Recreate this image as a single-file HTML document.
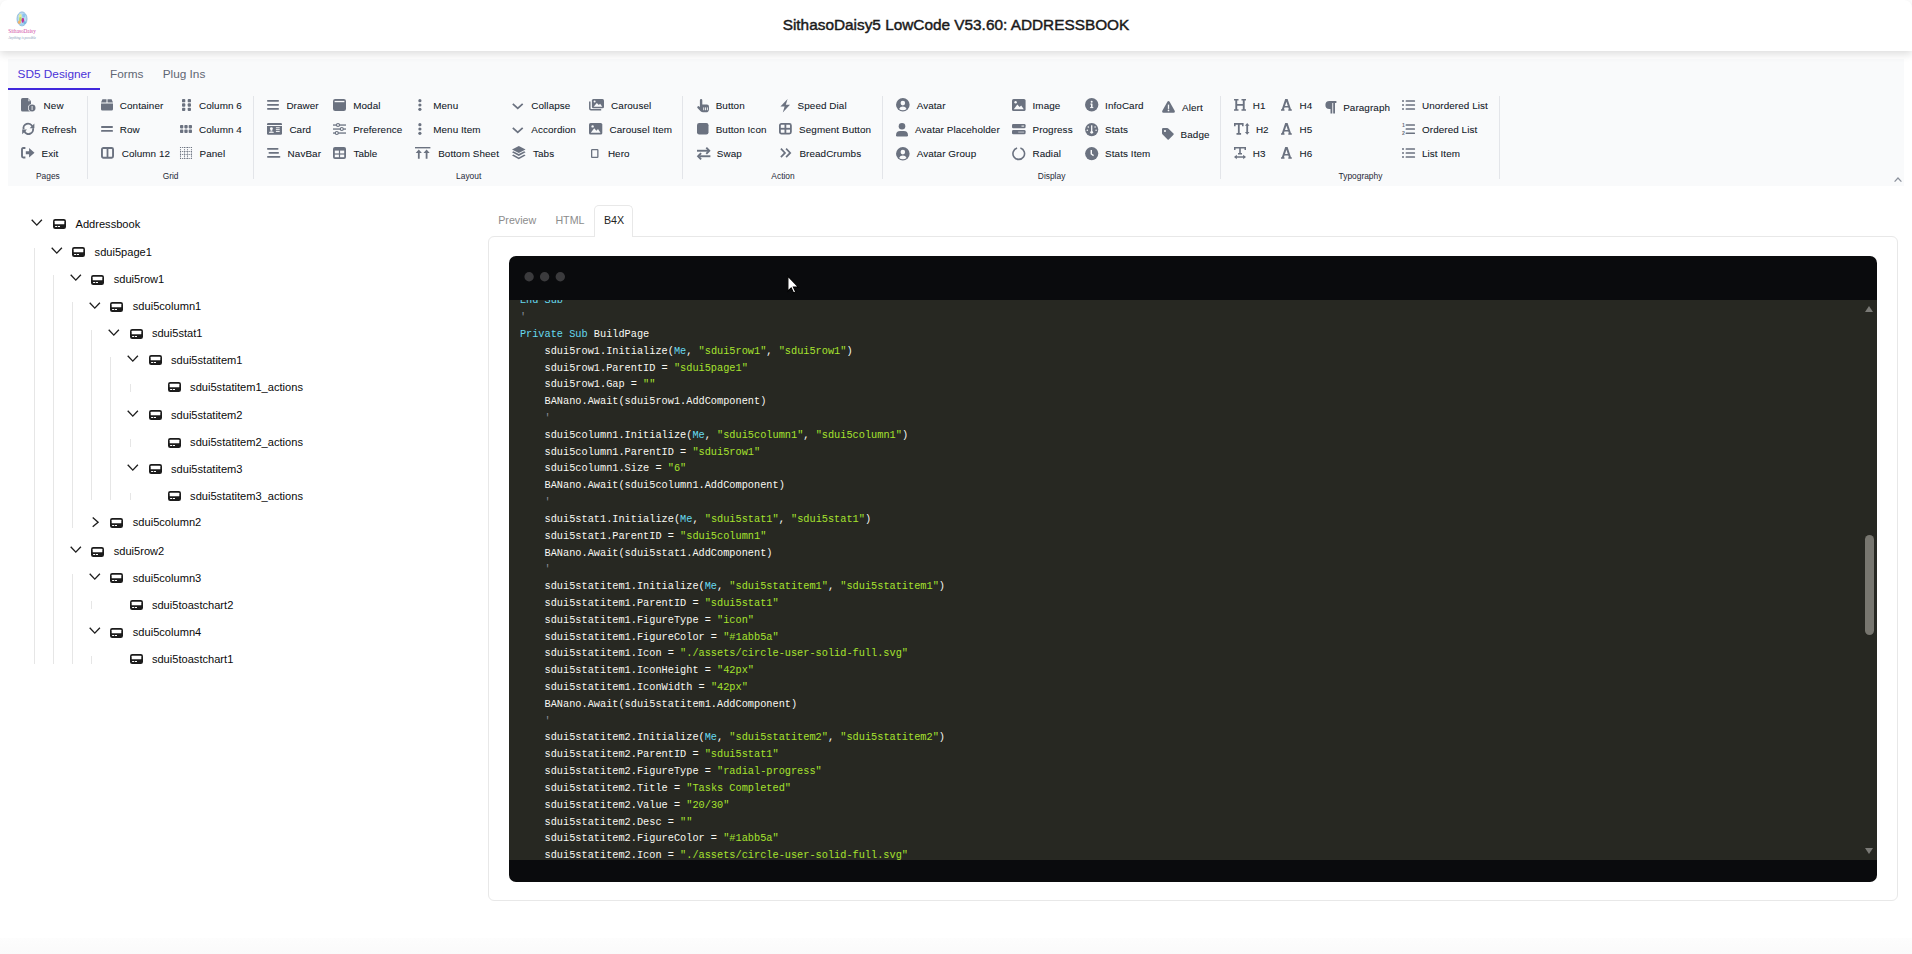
<!DOCTYPE html>
<html><head><meta charset="utf-8"><title>SithasoDaisy5 LowCode</title><style>
*{margin:0;padding:0}
html{background:#fff}
html,body{width:1912px;height:954px;overflow:hidden;font-family:"Liberation Sans",sans-serif}
.t{position:absolute;white-space:pre}
.i{position:absolute;overflow:visible}
#hdr{position:absolute;left:0;top:0;width:1912px;height:51px;background:#fff;border-radius:8px 8px 0 0;box-shadow:0 3px 9px rgba(0,0,0,.14)}
#ribbon{position:absolute;left:8px;top:59px;width:1896px;height:127px;background:#f9fafb;z-index:-1}
#cw{position:absolute;left:509.1px;top:256px;width:1367.9px;height:625.5px;background:#0a0b0d;border-radius:7px;overflow:hidden}
#code{position:absolute;left:0;top:44px;width:100%;height:559.6px;background:#272822;overflow:hidden}
#codein{position:absolute;left:10.8px;top:-24.48px;font-family:"Liberation Mono",monospace;font-size:10.27px;line-height:16.81px;color:#f8f8f2;white-space:pre}
#sbu{position:absolute;left:1355.9px;top:49.7px;width:0;height:0;border-left:4.6px solid transparent;border-right:4.6px solid transparent;border-bottom:6.3px solid #7a7a76}
#sbd{position:absolute;left:1355.7px;top:591.8px;width:0;height:0;border-left:4.6px solid transparent;border-right:4.6px solid transparent;border-top:6.1px solid #7a7a76}
#thumb{position:absolute;left:1355.8px;top:278.9px;width:9.2px;height:99.9px;border-radius:4.6px;background:#77766f}
</style></head>
<body>
<div id="hdr"></div>
<svg class="i" style="left:7px;top:10px" width="30" height="32" viewBox="0 0 30 32"><ellipse cx="15" cy="8.9" rx="5" ry="7" fill="#b9dcf2" stroke="#7fb0d8" stroke-width=".8"/><ellipse cx="13.2" cy="6" rx="1.5" ry="2" fill="#e6ec9a"/><ellipse cx="16.8" cy="5.6" rx="1.6" ry="2" fill="#8cc4ee"/><ellipse cx="13.4" cy="9.2" rx="1.4" ry="2.3" fill="#b8dc6a"/><ellipse cx="15.9" cy="10.3" rx="1.3" ry="2.6" fill="#c2319a"/><ellipse cx="12.4" cy="12.2" rx="1.5" ry="1.7" fill="#f2b36a"/><ellipse cx="17.6" cy="12.6" rx="1.4" ry="1.7" fill="#79b6e3"/><ellipse cx="15" cy="14.6" rx="2" ry="1.1" fill="#9fd0ef"/><text x="15" y="23" text-anchor="middle" font-family="Liberation Serif" font-size="6.6" fill="#d14aa5" textLength="27.5" lengthAdjust="spacingAndGlyphs">SithasoDaisy</text><text x="15" y="29.4" text-anchor="middle" font-family="Liberation Serif" font-style="italic" font-size="4.8" fill="#7d93b5" textLength="27.5" lengthAdjust="spacingAndGlyphs">Anything is possible</text></svg>
<div class="t" style="left:0;width:1912px;top:15px;font-size:15.37px;line-height:20px;text-align:center;font-weight:normal;color:#1a1a1a;-webkit-text-stroke:0.45px #1a1a1a"><span style="position:relative;left:0px">SithasoDaisy5 LowCode V53.60: ADDRESSBOOK</span></div>
<div id="ribbon"></div>
<div class="t" style="left:17.60px;top:68.81px;font-size:11.8px;line-height:11.8px;color:#4a32d8;font-weight:normal;font-family:'Liberation Sans';">SD5 Designer</div>
<div style="position:absolute;left:8px;top:88px;width:92px;height:2px;background:#4128dc"></div>
<div class="t" style="left:110.00px;top:68.81px;font-size:11.8px;line-height:11.8px;color:#5f6673;font-weight:normal;font-family:'Liberation Sans';">Forms</div>
<div class="t" style="left:162.70px;top:68.81px;font-size:11.8px;line-height:11.8px;color:#5f6673;font-weight:normal;font-family:'Liberation Sans';">Plug Ins</div>
<div style="position:absolute;left:87.1px;top:96.3px;width:1px;height:82.3px;background:#e3e5e9"></div>
<div style="position:absolute;left:253.0px;top:96.3px;width:1px;height:82.3px;background:#e3e5e9"></div>
<div style="position:absolute;left:681.9px;top:96.3px;width:1px;height:82.3px;background:#e3e5e9"></div>
<div style="position:absolute;left:881.9px;top:96.3px;width:1px;height:82.3px;background:#e3e5e9"></div>
<div style="position:absolute;left:1219.9px;top:96.3px;width:1px;height:82.3px;background:#e3e5e9"></div>
<div style="position:absolute;left:1499.0px;top:96.3px;width:1px;height:82.3px;background:#e3e5e9"></div>
<svg class="i" style="left:21.10px;top:98.40px;" width="15.00" height="13.60" viewBox="0 0 15.00 13.60"><path fill="#6b7280" d="M1.6 0H6.9L10 3.1V13.6H1.6Q0 13.6 0 12V1.6Q0 0 1.6 0Z"/><path fill="#f9fafb" d="M7 0.4V3.2H9.8Z" opacity=".6"/><circle cx="11.1" cy="10" r="4.1" fill="#f9fafb"/><circle cx="11.1" cy="10" r="3.4" fill="#6b7280"/><rect x="10.6" y="8" width="1" height="4" fill="#f9fafb" opacity=".85"/></svg>
<div class="t" style="left:43.60px;top:101.42px;font-size:9.9px;line-height:9.9px;color:#111827;font-weight:normal;font-family:'Liberation Sans';letter-spacing:.08px;-webkit-text-stroke:.07px #111827">New</div>
<svg class="i" style="left:21.80px;top:123.40px;" width="12.60" height="11.60" viewBox="0 0 12.60 11.60"><g fill="none" stroke="#6b7280" stroke-width="1.9"><path d="M1.6 6.3A4.6 4.6 0 0 1 10.3 3.4"/><path d="M11 5.3A4.6 4.6 0 0 1 2.3 8.2"/></g><path fill="#6b7280" d="M12.4 0.4V5.2H7.6Z"/><path fill="#6b7280" d="M0.2 11.2V6.4H5Z"/></svg>
<div class="t" style="left:41.50px;top:125.42px;font-size:9.9px;line-height:9.9px;color:#111827;font-weight:normal;font-family:'Liberation Sans';letter-spacing:.08px;-webkit-text-stroke:.07px #111827">Refresh</div>
<svg class="i" style="left:21.10px;top:147.10px;" width="13.60" height="11.50" viewBox="0 0 13.60 11.50"><path fill="none" stroke="#6b7280" stroke-width="1.9" d="M4.4 1H2.2Q1 1 1 2.2V9.3Q1 10.5 2.2 10.5H4.4"/><path fill="#6b7280" d="M4.8 4.2H8.1V1.1L13.5 5.75L8.1 10.4V7.3H4.8Z"/></svg>
<div class="t" style="left:41.50px;top:149.42px;font-size:9.9px;line-height:9.9px;color:#111827;font-weight:normal;font-family:'Liberation Sans';letter-spacing:.08px;-webkit-text-stroke:.07px #111827">Exit</div>
<svg class="i" style="left:101.00px;top:99.20px;" width="12.00" height="11.60" viewBox="0 0 12.00 11.60"><path fill="#6b7280" d="M1.4 0.3H5.5V3.6H0ZM6.5 0.3H10.6L12 3.6H6.5ZM0 4.5H12V10.2Q12 11.6 10.6 11.6H1.4Q0 11.6 0 10.2Z"/></svg>
<div class="t" style="left:119.80px;top:101.42px;font-size:9.9px;line-height:9.9px;color:#111827;font-weight:normal;font-family:'Liberation Sans';letter-spacing:.08px;-webkit-text-stroke:.07px #111827">Container</div>
<svg class="i" style="left:101.00px;top:126.20px;" width="12.00" height="5.80" viewBox="0 0 12.00 5.80"><rect x="0" y="0" width="12" height="1.9" rx=".9" fill="#6b7280"/><rect x="0" y="3.9" width="12" height="1.9" rx=".9" fill="#6b7280"/></svg>
<div class="t" style="left:119.80px;top:125.42px;font-size:9.9px;line-height:9.9px;color:#111827;font-weight:normal;font-family:'Liberation Sans';letter-spacing:.08px;-webkit-text-stroke:.07px #111827">Row</div>
<svg class="i" style="left:101.00px;top:147.00px;" width="13.00" height="11.70" viewBox="0 0 13.00 11.70"><rect x="0.95" y="0.95" width="11.1" height="9.8" rx="1.4" fill="none" stroke="#6b7280" stroke-width="1.9"/><rect x="5.6" y="1" width="1.8" height="9.8" fill="#6b7280"/></svg>
<div class="t" style="left:121.70px;top:149.42px;font-size:9.9px;line-height:9.9px;color:#111827;font-weight:normal;font-family:'Liberation Sans';letter-spacing:.08px;-webkit-text-stroke:.07px #111827">Column 12</div>
<svg class="i" style="left:182.20px;top:99.00px;" width="9.00" height="12.00" viewBox="0 0 9.00 12.00"><rect x="0" y="0" width="3.3" height="3.3" rx=".9" fill="#6b7280"/><rect x="0" y="4.35" width="3.3" height="3.3" rx=".9" fill="#6b7280"/><rect x="0" y="8.7" width="3.3" height="3.3" rx=".9" fill="#6b7280"/><rect x="5.7" y="0" width="3.3" height="3.3" rx=".9" fill="#6b7280"/><rect x="5.7" y="4.35" width="3.3" height="3.3" rx=".9" fill="#6b7280"/><rect x="5.7" y="8.7" width="3.3" height="3.3" rx=".9" fill="#6b7280"/></svg>
<div class="t" style="left:199.00px;top:101.42px;font-size:9.9px;line-height:9.9px;color:#111827;font-weight:normal;font-family:'Liberation Sans';letter-spacing:.08px;-webkit-text-stroke:.07px #111827">Column 6</div>
<svg class="i" style="left:180.00px;top:125.00px;" width="12.00" height="8.00" viewBox="0 0 12.00 8.00"><rect x="0" y="0" width="3.3" height="3.4" rx=".8" fill="#6b7280"/><rect x="0" y="4.6" width="3.3" height="3.4" rx=".8" fill="#6b7280"/><rect x="4.35" y="0" width="3.3" height="3.4" rx=".8" fill="#6b7280"/><rect x="4.35" y="4.6" width="3.3" height="3.4" rx=".8" fill="#6b7280"/><rect x="8.7" y="0" width="3.3" height="3.4" rx=".8" fill="#6b7280"/><rect x="8.7" y="4.6" width="3.3" height="3.4" rx=".8" fill="#6b7280"/></svg>
<div class="t" style="left:199.00px;top:125.42px;font-size:9.9px;line-height:9.9px;color:#111827;font-weight:normal;font-family:'Liberation Sans';letter-spacing:.08px;-webkit-text-stroke:.07px #111827">Column 4</div>
<svg class="i" style="left:180.00px;top:147.00px;" width="12.00" height="12.00" viewBox="0 0 12.00 12.00"><g stroke="#6b7280" stroke-width="1.05" stroke-dasharray="1.1 1.05"><line x1="0.5" y1="0" x2="0.5" y2="12"/><line x1="0" y1="0.5" x2="12" y2="0.5"/><line x1="4.5" y1="0" x2="4.5" y2="12"/><line x1="0" y1="4.5" x2="12" y2="4.5"/><line x1="7.5" y1="0" x2="7.5" y2="12"/><line x1="0" y1="7.5" x2="12" y2="7.5"/><line x1="11.5" y1="0" x2="11.5" y2="12"/><line x1="0" y1="11.5" x2="12" y2="11.5"/></g></svg>
<div class="t" style="left:199.50px;top:149.42px;font-size:9.9px;line-height:9.9px;color:#111827;font-weight:normal;font-family:'Liberation Sans';letter-spacing:.08px;-webkit-text-stroke:.07px #111827">Panel</div>
<svg class="i" style="left:267.20px;top:100.00px;" width="12.00" height="9.80" viewBox="0 0 12.00 9.80"><rect x="0" y="0" width="12" height="1.7" rx=".8" fill="#6b7280"/><rect x="0" y="4.05" width="12" height="1.7" rx=".8" fill="#6b7280"/><rect x="0" y="8.1" width="12" height="1.7" rx=".8" fill="#6b7280"/></svg>
<div class="t" style="left:286.40px;top:101.42px;font-size:9.9px;line-height:9.9px;color:#111827;font-weight:normal;font-family:'Liberation Sans';letter-spacing:.08px;-webkit-text-stroke:.07px #111827">Drawer</div>
<svg class="i" style="left:267.20px;top:123.30px;" width="15.00" height="11.80" viewBox="0 0 15.00 11.80"><path fill="#6b7280" d="M1.2 0H13.8Q15 0 15 1.2V2.1H0V1.2Q0 0 1.2 0Z"/><path fill="#6b7280" d="M0 3H15V10.6Q15 11.8 13.8 11.8H1.2Q0 11.8 0 10.6Z"/><circle cx="4.4" cy="5.7" r="1.45" fill="#f9fafb"/><path fill="#f9fafb" d="M3.6 7.2H5.2L5.6 8.6H3.2Z"/><rect x="2.1" y="8.8" width="4.6" height="1.05" fill="#f9fafb"/><rect x="8.9" y="4.3" width="3.8" height=".95" fill="#f9fafb"/><rect x="8.9" y="6.2" width="3.8" height=".95" fill="#f9fafb"/><rect x="8.9" y="8.1" width="3.8" height=".95" fill="#f9fafb"/></svg>
<div class="t" style="left:289.40px;top:125.42px;font-size:9.9px;line-height:9.9px;color:#111827;font-weight:normal;font-family:'Liberation Sans';letter-spacing:.08px;-webkit-text-stroke:.07px #111827">Card</div>
<svg class="i" style="left:267.20px;top:148.00px;" width="13.40" height="9.80" viewBox="0 0 13.40 9.80"><rect x="0" y="0" width="11.5" height="1.7" rx=".8" fill="#6b7280"/><rect x="1.5" y="4.05" width="10.5" height="1.7" rx=".8" fill="#6b7280"/><rect x="0" y="8.1" width="13.4" height="1.7" rx=".8" fill="#6b7280"/></svg>
<div class="t" style="left:287.60px;top:149.42px;font-size:9.9px;line-height:9.9px;color:#111827;font-weight:normal;font-family:'Liberation Sans';letter-spacing:.08px;-webkit-text-stroke:.07px #111827">NavBar</div>
<svg class="i" style="left:332.80px;top:99.00px;" width="13.00" height="12.00" viewBox="0 0 13.00 12.00"><rect x="0" y="0" width="13" height="12" rx="2.2" fill="#6b7280"/><rect x="1.6" y="1.9" width="9.8" height="1.3" fill="#f9fafb"/></svg>
<div class="t" style="left:353.20px;top:101.42px;font-size:9.9px;line-height:9.9px;color:#111827;font-weight:normal;font-family:'Liberation Sans';letter-spacing:.08px;-webkit-text-stroke:.07px #111827">Modal</div>
<svg class="i" style="left:332.80px;top:123.00px;" width="13.00" height="12.00" viewBox="0 0 13.00 12.00"><g fill="#6b7280"><rect x="0" y="1.4" width="13" height="1.3"/><rect x="0" y="5.4" width="13" height="1.3"/><rect x="0" y="9.4" width="13" height="1.3"/></g><g fill="#f9fafb" stroke="#6b7280" stroke-width="1.2"><circle cx="5" cy="2" r="1.5"/><circle cx="8.8" cy="6" r="1.5"/><circle cx="3.8" cy="10" r="1.5"/></g></svg>
<div class="t" style="left:353.20px;top:125.42px;font-size:9.9px;line-height:9.9px;color:#111827;font-weight:normal;font-family:'Liberation Sans';letter-spacing:.08px;-webkit-text-stroke:.07px #111827">Preference</div>
<svg class="i" style="left:332.80px;top:147.00px;" width="13.00" height="12.00" viewBox="0 0 13.00 12.00"><rect x="0" y="0" width="13" height="12" rx="2" fill="#6b7280"/><g fill="#f9fafb"><rect x="1.8" y="3.6" width="4.1" height="2.8"/><rect x="7.1" y="3.6" width="4.1" height="2.8"/><rect x="1.8" y="7.6" width="4.1" height="2.6"/><rect x="7.1" y="7.6" width="4.1" height="2.6"/></g></svg>
<div class="t" style="left:353.40px;top:149.42px;font-size:9.9px;line-height:9.9px;color:#111827;font-weight:normal;font-family:'Liberation Sans';letter-spacing:.08px;-webkit-text-stroke:.07px #111827">Table</div>
<svg class="i" style="left:418.40px;top:99.00px;" width="3.80" height="12.00" viewBox="0 0 3.80 12.00"><circle cx="1.9" cy="1.7" r="1.6" fill="#6b7280"/><circle cx="1.9" cy="6" r="1.6" fill="#6b7280"/><circle cx="1.9" cy="10.3" r="1.6" fill="#6b7280"/></svg>
<div class="t" style="left:433.20px;top:101.42px;font-size:9.9px;line-height:9.9px;color:#111827;font-weight:normal;font-family:'Liberation Sans';letter-spacing:.08px;-webkit-text-stroke:.07px #111827">Menu</div>
<svg class="i" style="left:418.40px;top:123.00px;" width="3.80" height="12.00" viewBox="0 0 3.80 12.00"><circle cx="1.9" cy="1.7" r="1.6" fill="#6b7280"/><circle cx="1.9" cy="6" r="1.6" fill="#6b7280"/><circle cx="1.9" cy="10.3" r="1.6" fill="#6b7280"/></svg>
<div class="t" style="left:433.20px;top:125.42px;font-size:9.9px;line-height:9.9px;color:#111827;font-weight:normal;font-family:'Liberation Sans';letter-spacing:.08px;-webkit-text-stroke:.07px #111827">Menu Item</div>
<svg class="i" style="left:415.00px;top:147.10px;" width="15.40" height="11.70" viewBox="0 0 15.40 11.70"><rect x="0" y="0" width="15.4" height="1.4" fill="#6b7280"/><path fill="#6b7280" d="M3.8 2.4L0.7 6H2.9V11.7H4.7V6H6.9Z"/><path fill="#6b7280" d="M11.6 2.4L8.5 6H10.7V11.7H12.5V6H14.7Z"/></svg>
<div class="t" style="left:438.20px;top:149.42px;font-size:9.9px;line-height:9.9px;color:#111827;font-weight:normal;font-family:'Liberation Sans';letter-spacing:.08px;-webkit-text-stroke:.07px #111827">Bottom Sheet</div>
<svg class="i" style="left:511.60px;top:102.90px;" width="11.50" height="6.40" viewBox="0 0 11.50 6.40"><path d="M0.8 0.8L5.75 5.4L10.7 0.8" fill="none" stroke="#6b7280" stroke-width="1.75"/></svg>
<div class="t" style="left:531.30px;top:101.42px;font-size:9.9px;line-height:9.9px;color:#111827;font-weight:normal;font-family:'Liberation Sans';letter-spacing:.08px;-webkit-text-stroke:.07px #111827">Collapse</div>
<svg class="i" style="left:511.60px;top:126.90px;" width="11.50" height="6.40" viewBox="0 0 11.50 6.40"><path d="M0.8 0.8L5.75 5.4L10.7 0.8" fill="none" stroke="#6b7280" stroke-width="1.75"/></svg>
<div class="t" style="left:531.30px;top:125.42px;font-size:9.9px;line-height:9.9px;color:#111827;font-weight:normal;font-family:'Liberation Sans';letter-spacing:.08px;-webkit-text-stroke:.07px #111827">Accordion</div>
<svg class="i" style="left:511.60px;top:146.40px;" width="13.60" height="13.20" viewBox="0 0 13.60 13.20"><g fill="#6b7280"><path d="M6.8 0L13.6 3.5L6.8 7L0 3.5Z"/><path d="M1.4 5.3L6.8 8.1L12.2 5.3L13.6 6.3L6.8 9.9L0 6.3Z"/><path d="M1.4 8.6L6.8 11.4L12.2 8.6L13.6 9.6L6.8 13.2L0 9.6Z"/></g></svg>
<div class="t" style="left:533.00px;top:149.42px;font-size:9.9px;line-height:9.9px;color:#111827;font-weight:normal;font-family:'Liberation Sans';letter-spacing:.08px;-webkit-text-stroke:.07px #111827">Tabs</div>
<svg class="i" style="left:589.10px;top:99.20px;" width="15.00" height="11.50" viewBox="0 0 15.00 11.50"><path d="M0.8 2.6V9.6Q0.8 10.8 2 10.8H12.2" fill="none" stroke="#6b7280" stroke-width="1.5"/><rect x="2.9" y="0" width="12.1" height="9.3" rx="1.5" fill="#6b7280"/><path fill="#f9fafb" d="M4.6 7.8L7.8 3.9L9.8 6L11.1 4.7L13.3 7.8Z"/><circle cx="5.6" cy="2.6" r="1" fill="#f9fafb"/></svg>
<div class="t" style="left:611.10px;top:101.42px;font-size:9.9px;line-height:9.9px;color:#111827;font-weight:normal;font-family:'Liberation Sans';letter-spacing:.08px;-webkit-text-stroke:.07px #111827">Carousel</div>
<svg class="i" style="left:589.10px;top:123.30px;" width="13.30" height="11.60" viewBox="0 0 13.30 11.60"><rect x="0" y="0" width="13.3" height="11.6" rx="1.6" fill="#6b7280"/><path fill="#f9fafb" d="M1.8 9.8L5.2 5.2L7.4 7.7L9 6.1L11.5 9.8Z"/><circle cx="3.6" cy="3.4" r="1.2" fill="#f9fafb"/></svg>
<div class="t" style="left:609.50px;top:125.42px;font-size:9.9px;line-height:9.9px;color:#111827;font-weight:normal;font-family:'Liberation Sans';letter-spacing:.08px;-webkit-text-stroke:.07px #111827">Carousel Item</div>
<svg class="i" style="left:591.10px;top:148.70px;" width="7.50" height="9.00" viewBox="0 0 7.50 9.00"><rect x="0.65" y="0.65" width="6.2" height="7.7" rx=".6" fill="none" stroke="#6b7280" stroke-width="1.3"/></svg>
<div class="t" style="left:607.90px;top:149.42px;font-size:9.9px;line-height:9.9px;color:#111827;font-weight:normal;font-family:'Liberation Sans';letter-spacing:.08px;-webkit-text-stroke:.07px #111827">Hero</div>
<svg class="i" style="left:696.70px;top:98.60px;" width="12.00" height="13.30" viewBox="0 0 12.00 13.30"><path fill="#6b7280" d="M2.9 1.3Q2.9 0 4.1 0Q5.3 0 5.3 1.3V5.6H9.9Q12 5.6 12 7.7V10.2Q12 13.3 8.9 13.3H6.1Q4.6 13.3 3.6 12.2L0.5 8.9Q-0.2 8.1 0.6 7.4Q1.4 6.7 2.2 7.4L2.9 8.1Z"/><g fill="#f9fafb"><rect x="6.3" y="8.4" width=".9" height="2.8"/><rect x="8.1" y="8.4" width=".9" height="2.8"/><rect x="9.9" y="8.4" width=".9" height="2.8"/></g></svg>
<div class="t" style="left:715.70px;top:101.42px;font-size:9.9px;line-height:9.9px;color:#111827;font-weight:normal;font-family:'Liberation Sans';letter-spacing:.08px;-webkit-text-stroke:.07px #111827">Button</div>
<svg class="i" style="left:696.70px;top:123.40px;" width="11.50" height="11.50" viewBox="0 0 11.50 11.50"><rect x="0" y="0" width="11.5" height="11.5" rx="2.2" fill="#6b7280"/></svg>
<div class="t" style="left:715.70px;top:125.42px;font-size:9.9px;line-height:9.9px;color:#111827;font-weight:normal;font-family:'Liberation Sans';letter-spacing:.08px;-webkit-text-stroke:.07px #111827">Button Icon</div>
<svg class="i" style="left:696.70px;top:146.60px;" width="13.40" height="13.00" viewBox="0 0 13.40 13.00"><g fill="#6b7280"><rect x="0" y="2.8" width="11" height="1.9"/><rect x="2.4" y="8.3" width="11" height="1.9"/></g><g fill="none" stroke="#6b7280" stroke-width="1.9"><path d="M9.3 0.7L12.3 3.75L9.3 6.8"/><path d="M4.1 6.2L1.1 9.25L4.1 12.3"/></g></svg>
<div class="t" style="left:716.80px;top:149.42px;font-size:9.9px;line-height:9.9px;color:#111827;font-weight:normal;font-family:'Liberation Sans';letter-spacing:.08px;-webkit-text-stroke:.07px #111827">Swap</div>
<svg class="i" style="left:779.50px;top:98.60px;" width="10.40" height="13.40" viewBox="0 0 10.40 13.40"><path fill="#6b7280" d="M7.6 0L0.4 7.6H4.6L2.8 13.4L10 5.8H5.8Z"/></svg>
<div class="t" style="left:797.60px;top:101.42px;font-size:9.9px;line-height:9.9px;color:#111827;font-weight:normal;font-family:'Liberation Sans';letter-spacing:.08px;-webkit-text-stroke:.07px #111827">Speed Dial</div>
<svg class="i" style="left:779.00px;top:123.40px;" width="12.80" height="11.50" viewBox="0 0 12.80 11.50"><rect x="0.9" y="0.9" width="11" height="9.7" rx="1.5" fill="none" stroke="#6b7280" stroke-width="1.8"/><rect x="5.5" y="1" width="1.8" height="9.6" fill="#6b7280"/><rect x="1" y="4.85" width="10.8" height="1.8" fill="#6b7280"/></svg>
<div class="t" style="left:799.10px;top:125.42px;font-size:9.9px;line-height:9.9px;color:#111827;font-weight:normal;font-family:'Liberation Sans';letter-spacing:.08px;-webkit-text-stroke:.07px #111827">Segment Button</div>
<svg class="i" style="left:780.10px;top:148.10px;" width="11.30" height="9.80" viewBox="0 0 11.30 9.80"><g fill="none" stroke="#6b7280" stroke-width="1.7"><path d="M0.9 0.7L5 4.9L0.9 9.1"/><path d="M6.1 0.7L10.2 4.9L6.1 9.1"/></g></svg>
<div class="t" style="left:799.40px;top:149.42px;font-size:9.9px;line-height:9.9px;color:#111827;font-weight:normal;font-family:'Liberation Sans';letter-spacing:.08px;-webkit-text-stroke:.07px #111827">BreadCrumbs</div>
<svg class="i" style="left:896.20px;top:98.40px;" width="13.70" height="13.60" viewBox="0 0 13.70 13.60"><circle cx="6.85" cy="6.8" r="6.8" fill="#6b7280"/><circle cx="6.85" cy="5.1" r="2.3" fill="#f9fafb"/><path fill="#f9fafb" d="M3.1 10.9Q4.2 8.6 6.85 8.6Q9.5 8.6 10.6 10.9Q9 12.3 6.85 12.3Q4.7 12.3 3.1 10.9Z"/></svg>
<div class="t" style="left:916.70px;top:101.42px;font-size:9.9px;line-height:9.9px;color:#111827;font-weight:normal;font-family:'Liberation Sans';letter-spacing:.08px;-webkit-text-stroke:.07px #111827">Avatar</div>
<svg class="i" style="left:896.20px;top:122.50px;" width="12.00" height="13.40" viewBox="0 0 12.00 13.40"><circle cx="6" cy="3.3" r="3.3" fill="#6b7280"/><path fill="#6b7280" d="M0 12.2Q0 7.9 4.2 7.9H7.8Q12 7.9 12 12.2Q12 13.4 10.8 13.4H1.2Q0 13.4 0 12.2Z"/></svg>
<div class="t" style="left:915.10px;top:125.42px;font-size:9.9px;line-height:9.9px;color:#111827;font-weight:normal;font-family:'Liberation Sans';letter-spacing:.08px;-webkit-text-stroke:.07px #111827">Avatar Placeholder</div>
<svg class="i" style="left:896.20px;top:146.60px;" width="13.70" height="13.60" viewBox="0 0 13.70 13.60"><circle cx="6.85" cy="6.8" r="6.8" fill="#6b7280"/><circle cx="6.85" cy="5.1" r="2.3" fill="#f9fafb"/><path fill="#f9fafb" d="M3.1 10.9Q4.2 8.6 6.85 8.6Q9.5 8.6 10.6 10.9Q9 12.3 6.85 12.3Q4.7 12.3 3.1 10.9Z"/></svg>
<div class="t" style="left:916.70px;top:149.42px;font-size:9.9px;line-height:9.9px;color:#111827;font-weight:normal;font-family:'Liberation Sans';letter-spacing:.08px;-webkit-text-stroke:.07px #111827">Avatar Group</div>
<svg class="i" style="left:1012.10px;top:98.90px;" width="13.60" height="12.10" viewBox="0 0 13.60 12.10"><rect x="0" y="0" width="13.6" height="12.1" rx="1.6" fill="#6b7280"/><path fill="#f9fafb" d="M1.8 10.3L5.3 5.5L7.6 8.1L9.2 6.5L11.8 10.3Z"/><circle cx="3.6" cy="3.3" r="1.2" fill="#f9fafb"/></svg>
<div class="t" style="left:1032.50px;top:101.42px;font-size:9.9px;line-height:9.9px;color:#111827;font-weight:normal;font-family:'Liberation Sans';letter-spacing:.08px;-webkit-text-stroke:.07px #111827">Image</div>
<svg class="i" style="left:1012.10px;top:123.80px;" width="13.60" height="10.20" viewBox="0 0 13.60 10.20"><rect x="0" y="0" width="13.6" height="4.3" rx="1.3" fill="#6b7280"/><rect x="0" y="5.9" width="13.6" height="4.3" rx="1.3" fill="#6b7280"/><rect x="9.5" y="1.6" width="2.6" height="1" fill="#f9fafb"/><rect x="6.2" y="7.6" width="5.9" height="1" fill="#f9fafb" opacity=".6"/></svg>
<div class="t" style="left:1032.50px;top:125.42px;font-size:9.9px;line-height:9.9px;color:#111827;font-weight:normal;font-family:'Liberation Sans';letter-spacing:.08px;-webkit-text-stroke:.07px #111827">Progress</div>
<svg class="i" style="left:1012.10px;top:146.60px;" width="13.60" height="13.10" viewBox="0 0 13.60 13.10"><path d="M8.4 1.05A5.8 5.8 0 1 1 5.1 1.05" fill="none" stroke="#6b7280" stroke-width="1.6"/></svg>
<div class="t" style="left:1032.50px;top:149.42px;font-size:9.9px;line-height:9.9px;color:#111827;font-weight:normal;font-family:'Liberation Sans';letter-spacing:.08px;-webkit-text-stroke:.07px #111827">Radial</div>
<svg class="i" style="left:1084.70px;top:98.40px;" width="13.40" height="13.40" viewBox="0 0 13.40 13.40"><circle cx="6.7" cy="6.7" r="6.7" fill="#6b7280"/><circle cx="6.7" cy="3.7" r="1" fill="#f9fafb"/><rect x="6" y="5.6" width="1.5" height="4" fill="#f9fafb"/><rect x="5.1" y="9.1" width="3.2" height="1" fill="#f9fafb"/><rect x="5.3" y="5.6" width="1.5" height="1" fill="#f9fafb"/></svg>
<div class="t" style="left:1105.10px;top:101.42px;font-size:9.9px;line-height:9.9px;color:#111827;font-weight:normal;font-family:'Liberation Sans';letter-spacing:.08px;-webkit-text-stroke:.07px #111827">InfoCard</div>
<svg class="i" style="left:1084.70px;top:122.50px;" width="13.40" height="13.10" viewBox="0 0 13.40 13.10"><circle cx="6.7" cy="6.55" r="6.6" fill="#6b7280"/><rect x="6.05" y="2.3" width="1.3" height="6.5" fill="#f9fafb"/><circle cx="6.7" cy="9.3" r="1.4" fill="#f9fafb"/><circle cx="3.3" cy="4" r=".8" fill="#f9fafb"/><circle cx="10.1" cy="4" r=".8" fill="#f9fafb"/><circle cx="2.3" cy="7.2" r=".8" fill="#f9fafb"/><circle cx="11.1" cy="7.2" r=".8" fill="#f9fafb"/></svg>
<div class="t" style="left:1105.10px;top:125.42px;font-size:9.9px;line-height:9.9px;color:#111827;font-weight:normal;font-family:'Liberation Sans';letter-spacing:.08px;-webkit-text-stroke:.07px #111827">Stats</div>
<svg class="i" style="left:1084.70px;top:146.60px;" width="13.40" height="13.10" viewBox="0 0 13.40 13.10"><circle cx="6.7" cy="6.55" r="6.6" fill="#6b7280"/><path d="M6.3 3V7L8.6 8.6" fill="none" stroke="#f9fafb" stroke-width="1.4"/></svg>
<div class="t" style="left:1105.10px;top:149.42px;font-size:9.9px;line-height:9.9px;color:#111827;font-weight:normal;font-family:'Liberation Sans';letter-spacing:.08px;-webkit-text-stroke:.07px #111827">Stats Item</div>
<svg class="i" style="left:1162.00px;top:101.00px;" width="13.00" height="11.80" viewBox="0 0 13.00 11.80"><path fill="#6b7280" d="M6.5 0Q7.2 0 7.6 0.7L12.8 10Q13.4 11.8 11.7 11.8H1.3Q-0.4 11.8 0.2 10L5.4 0.7Q5.8 0 6.5 0Z"/><rect x="5.85" y="3.6" width="1.3" height="4.3" fill="#f9fafb"/><circle cx="6.5" cy="9.4" r=".85" fill="#f9fafb"/></svg>
<div class="t" style="left:1182.10px;top:102.82px;font-size:9.9px;line-height:9.9px;color:#111827;font-weight:normal;font-family:'Liberation Sans';letter-spacing:.08px;-webkit-text-stroke:.07px #111827">Alert</div>
<svg class="i" style="left:1161.70px;top:128.00px;" width="11.90" height="11.80" viewBox="0 0 11.90 11.80"><path fill="#6b7280" d="M0 1.2Q0 0 1.2 0H5.3Q5.9 0 6.3 0.4L11.5 5.6Q12.1 6.2 11.5 6.8L6.8 11.5Q6.2 12.1 5.6 11.5L0.4 6.3Q0 5.9 0 5.3Z"/><circle cx="3" cy="3" r="1.05" fill="#f9fafb"/></svg>
<div class="t" style="left:1180.60px;top:130.02px;font-size:9.9px;line-height:9.9px;color:#111827;font-weight:normal;font-family:'Liberation Sans';letter-spacing:.08px;-webkit-text-stroke:.07px #111827">Badge</div>
<svg class="i" style="left:1233.60px;top:99.20px;" width="12.00" height="11.80" viewBox="0 0 12.00 11.80"><path fill="#6b7280" d="M0 0H4.5V1.6H3.2V5H8.8V1.6H7.5V0H12V1.6H10.7V10.2H12V11.8H7.5V10.2H8.8V6.7H3.2V10.2H4.5V11.8H0V10.2H1.3V1.6H0Z"/></svg>
<div class="t" style="left:1252.70px;top:101.42px;font-size:9.9px;line-height:9.9px;color:#111827;font-weight:normal;font-family:'Liberation Sans';letter-spacing:.08px;-webkit-text-stroke:.07px #111827">H1</div>
<svg class="i" style="left:1233.60px;top:123.30px;" width="15.50" height="11.80" viewBox="0 0 15.50 11.80"><path fill="#6b7280" d="M0 0H9.6V3.3H8V1.7H5.7V10.1H7.1V11.8H2.5V10.1H3.9V1.7H1.6V3.3H0Z"/><path fill="#6b7280" d="M13.2 0L15.5 2.7H14.1V9.1H15.5L13.2 11.8L10.9 9.1H12.3V2.7H10.9Z"/></svg>
<div class="t" style="left:1255.90px;top:125.42px;font-size:9.9px;line-height:9.9px;color:#111827;font-weight:normal;font-family:'Liberation Sans';letter-spacing:.08px;-webkit-text-stroke:.07px #111827">H2</div>
<svg class="i" style="left:1233.60px;top:147.10px;" width="12.00" height="12.10" viewBox="0 0 12.00 12.10"><path fill="#6b7280" d="M0 0H12V2.9H10.5V1.6H6.8V6.1H8V7.4H4V6.1H5.2V1.6H1.5V2.9H0Z"/><path fill="#6b7280" d="M0 10L2.8 7.8V9.2H9.2V7.8L12 10L9.2 12.2V10.8H2.8V12.2Z"/></svg>
<div class="t" style="left:1252.70px;top:149.42px;font-size:9.9px;line-height:9.9px;color:#111827;font-weight:normal;font-family:'Liberation Sans';letter-spacing:.08px;-webkit-text-stroke:.07px #111827">H3</div>
<svg class="i" style="left:1281.30px;top:99.20px;" width="10.80" height="11.80" viewBox="0 0 10.80 11.80"><path fill="#6b7280" fill-rule="evenodd" d="M4.2 0H6.6L10 10.2H10.8V11.8H7.3V10.2H7.9L7.3 8.5H3.5L2.9 10.2H3.5V11.8H0V10.2H0.8ZM4 7H6.8L5.4 2.8Z"/></svg>
<div class="t" style="left:1299.50px;top:101.42px;font-size:9.9px;line-height:9.9px;color:#111827;font-weight:normal;font-family:'Liberation Sans';letter-spacing:.08px;-webkit-text-stroke:.07px #111827">H4</div>
<svg class="i" style="left:1281.30px;top:123.30px;" width="10.80" height="11.80" viewBox="0 0 10.80 11.80"><path fill="#6b7280" fill-rule="evenodd" d="M4.2 0H6.6L10 10.2H10.8V11.8H7.3V10.2H7.9L7.3 8.5H3.5L2.9 10.2H3.5V11.8H0V10.2H0.8ZM4 7H6.8L5.4 2.8Z"/></svg>
<div class="t" style="left:1299.50px;top:125.42px;font-size:9.9px;line-height:9.9px;color:#111827;font-weight:normal;font-family:'Liberation Sans';letter-spacing:.08px;-webkit-text-stroke:.07px #111827">H5</div>
<svg class="i" style="left:1281.30px;top:147.10px;" width="10.80" height="11.80" viewBox="0 0 10.80 11.80"><path fill="#6b7280" fill-rule="evenodd" d="M4.2 0H6.6L10 10.2H10.8V11.8H7.3V10.2H7.9L7.3 8.5H3.5L2.9 10.2H3.5V11.8H0V10.2H0.8ZM4 7H6.8L5.4 2.8Z"/></svg>
<div class="t" style="left:1299.50px;top:149.42px;font-size:9.9px;line-height:9.9px;color:#111827;font-weight:normal;font-family:'Liberation Sans';letter-spacing:.08px;-webkit-text-stroke:.07px #111827">H6</div>
<svg class="i" style="left:1324.80px;top:100.50px;" width="11.40" height="12.40" viewBox="0 0 11.40 12.40"><path fill="#6b7280" d="M4.4 0H11.4V1.9H10V12.4H8.2V1.9H7.3V12.4H5.5V8H4.4A4 4 0 0 1 4.4 0Z"/></svg>
<div class="t" style="left:1343.20px;top:103.02px;font-size:9.9px;line-height:9.9px;color:#111827;font-weight:normal;font-family:'Liberation Sans';letter-spacing:.08px;-webkit-text-stroke:.07px #111827">Paragraph</div>
<svg class="i" style="left:1402.00px;top:100.00px;" width="13.10" height="10.10" viewBox="0 0 13.10 10.10"><circle cx="1" cy="1" r="1" fill="#6b7280"/><rect x="3.6" y="0.25" width="9.5" height="1.5" rx=".5" fill="#6b7280"/><circle cx="1" cy="5.05" r="1" fill="#6b7280"/><rect x="3.6" y="4.3" width="9.5" height="1.5" rx=".5" fill="#6b7280"/><circle cx="1" cy="9.1" r="1" fill="#6b7280"/><rect x="3.6" y="8.35" width="9.5" height="1.5" rx=".5" fill="#6b7280"/></svg>
<div class="t" style="left:1422.00px;top:101.42px;font-size:9.9px;line-height:9.9px;color:#111827;font-weight:normal;font-family:'Liberation Sans';letter-spacing:.08px;-webkit-text-stroke:.07px #111827">Unordered List</div>
<svg class="i" style="left:1402.00px;top:123.00px;" width="13.00" height="11.80" viewBox="0 0 13.00 11.80"><text x="0" y="4.3" font-family="Liberation Sans" font-weight="bold" font-size="5.2" fill="#6b7280">1</text><text x="0" y="11.6" font-family="Liberation Sans" font-weight="bold" font-size="5.2" fill="#6b7280">2</text><rect x="3.6" y="1.2" width="9.4" height="1.5" rx=".5" fill="#6b7280"/><rect x="3.6" y="5.2" width="9.4" height="1.5" rx=".5" fill="#6b7280"/><rect x="3.6" y="9.6" width="9.4" height="1.5" rx=".5" fill="#6b7280"/></svg>
<div class="t" style="left:1422.00px;top:125.42px;font-size:9.9px;line-height:9.9px;color:#111827;font-weight:normal;font-family:'Liberation Sans';letter-spacing:.08px;-webkit-text-stroke:.07px #111827">Ordered List</div>
<svg class="i" style="left:1402.00px;top:148.20px;" width="13.10" height="10.10" viewBox="0 0 13.10 10.10"><circle cx="1" cy="1" r="1" fill="#6b7280"/><rect x="3.6" y="0.25" width="9.5" height="1.5" rx=".5" fill="#6b7280"/><circle cx="1" cy="5.05" r="1" fill="#6b7280"/><rect x="3.6" y="4.3" width="9.5" height="1.5" rx=".5" fill="#6b7280"/><circle cx="1" cy="9.1" r="1" fill="#6b7280"/><rect x="3.6" y="8.35" width="9.5" height="1.5" rx=".5" fill="#6b7280"/></svg>
<div class="t" style="left:1422.00px;top:149.42px;font-size:9.9px;line-height:9.9px;color:#111827;font-weight:normal;font-family:'Liberation Sans';letter-spacing:.08px;-webkit-text-stroke:.07px #111827">List Item</div>
<div class="t" style="left:-12.1px;width:120px;text-align:center;top:171.79px;font-size:8.4px;line-height:8.4px;color:#1f2937">Pages</div>
<div class="t" style="left:110.6px;width:120px;text-align:center;top:171.79px;font-size:8.4px;line-height:8.4px;color:#1f2937">Grid</div>
<div class="t" style="left:408.7px;width:120px;text-align:center;top:171.79px;font-size:8.4px;line-height:8.4px;color:#1f2937">Layout</div>
<div class="t" style="left:723.0px;width:120px;text-align:center;top:171.79px;font-size:8.4px;line-height:8.4px;color:#1f2937">Action</div>
<div class="t" style="left:991.6px;width:120px;text-align:center;top:171.79px;font-size:8.4px;line-height:8.4px;color:#1f2937">Display</div>
<div class="t" style="left:1300.5px;width:120px;text-align:center;top:171.79px;font-size:8.4px;line-height:8.4px;color:#1f2937">Typography</div>
<svg class="i" style="left:1893.50px;top:177.10px;" width="8.00" height="5.30" viewBox="0 0 8.00 5.30"><path d="M0.6 4.7L4 1L7.4 4.7" fill="none" stroke="#8a909b" stroke-width="1.2"/></svg>
<svg class="i" style="left:31.40px;top:219.00px;" width="11.60" height="7.20" viewBox="0 0 11.60 7.20"><path d="M0.7 0.7L5.8 6.1L10.9 0.7" fill="none" stroke="#1e1e1e" stroke-width="1.35"/></svg>
<svg class="i" style="left:53.10px;top:219.20px;" width="13.00" height="10.00" viewBox="0 0 13.00 10.00"><rect x="0" y="0" width="13" height="10" rx="2.2" fill="#1c1c1c"/><rect x="1.7" y="1.7" width="9.6" height="3.6" rx=".6" fill="#fff"/><rect x="2.1" y="7" width="2.1" height="1" fill="#fff"/><rect x="4.9" y="7" width="2.1" height="1" fill="#fff"/></svg>
<div class="t" style="left:75.50px;top:218.60px;font-size:11.1px;line-height:11.1px;color:#0a0a0a;font-weight:normal;font-family:'Liberation Sans';">Addressbook</div>
<svg class="i" style="left:50.50px;top:247.20px;" width="11.60" height="7.20" viewBox="0 0 11.60 7.20"><path d="M0.7 0.7L5.8 6.1L10.9 0.7" fill="none" stroke="#1e1e1e" stroke-width="1.35"/></svg>
<svg class="i" style="left:72.20px;top:247.40px;" width="13.00" height="10.00" viewBox="0 0 13.00 10.00"><rect x="0" y="0" width="13" height="10" rx="2.2" fill="#1c1c1c"/><rect x="1.7" y="1.7" width="9.6" height="3.6" rx=".6" fill="#fff"/><rect x="2.1" y="7" width="2.1" height="1" fill="#fff"/><rect x="4.9" y="7" width="2.1" height="1" fill="#fff"/></svg>
<div class="t" style="left:94.60px;top:246.80px;font-size:11.1px;line-height:11.1px;color:#0a0a0a;font-weight:normal;font-family:'Liberation Sans';">sdui5page1</div>
<svg class="i" style="left:69.60px;top:274.30px;" width="11.60" height="7.20" viewBox="0 0 11.60 7.20"><path d="M0.7 0.7L5.8 6.1L10.9 0.7" fill="none" stroke="#1e1e1e" stroke-width="1.35"/></svg>
<svg class="i" style="left:91.30px;top:274.50px;" width="13.00" height="10.00" viewBox="0 0 13.00 10.00"><rect x="0" y="0" width="13" height="10" rx="2.2" fill="#1c1c1c"/><rect x="1.7" y="1.7" width="9.6" height="3.6" rx=".6" fill="#fff"/><rect x="2.1" y="7" width="2.1" height="1" fill="#fff"/><rect x="4.9" y="7" width="2.1" height="1" fill="#fff"/></svg>
<div class="t" style="left:113.70px;top:273.90px;font-size:11.1px;line-height:11.1px;color:#0a0a0a;font-weight:normal;font-family:'Liberation Sans';">sdui5row1</div>
<svg class="i" style="left:88.70px;top:301.50px;" width="11.60" height="7.20" viewBox="0 0 11.60 7.20"><path d="M0.7 0.7L5.8 6.1L10.9 0.7" fill="none" stroke="#1e1e1e" stroke-width="1.35"/></svg>
<svg class="i" style="left:110.40px;top:301.70px;" width="13.00" height="10.00" viewBox="0 0 13.00 10.00"><rect x="0" y="0" width="13" height="10" rx="2.2" fill="#1c1c1c"/><rect x="1.7" y="1.7" width="9.6" height="3.6" rx=".6" fill="#fff"/><rect x="2.1" y="7" width="2.1" height="1" fill="#fff"/><rect x="4.9" y="7" width="2.1" height="1" fill="#fff"/></svg>
<div class="t" style="left:132.80px;top:301.10px;font-size:11.1px;line-height:11.1px;color:#0a0a0a;font-weight:normal;font-family:'Liberation Sans';">sdui5column1</div>
<svg class="i" style="left:107.80px;top:328.50px;" width="11.60" height="7.20" viewBox="0 0 11.60 7.20"><path d="M0.7 0.7L5.8 6.1L10.9 0.7" fill="none" stroke="#1e1e1e" stroke-width="1.35"/></svg>
<svg class="i" style="left:129.50px;top:328.70px;" width="13.00" height="10.00" viewBox="0 0 13.00 10.00"><rect x="0" y="0" width="13" height="10" rx="2.2" fill="#1c1c1c"/><rect x="1.7" y="1.7" width="9.6" height="3.6" rx=".6" fill="#fff"/><rect x="2.1" y="7" width="2.1" height="1" fill="#fff"/><rect x="4.9" y="7" width="2.1" height="1" fill="#fff"/></svg>
<div class="t" style="left:151.90px;top:328.10px;font-size:11.1px;line-height:11.1px;color:#0a0a0a;font-weight:normal;font-family:'Liberation Sans';">sdui5stat1</div>
<svg class="i" style="left:126.90px;top:355.10px;" width="11.60" height="7.20" viewBox="0 0 11.60 7.20"><path d="M0.7 0.7L5.8 6.1L10.9 0.7" fill="none" stroke="#1e1e1e" stroke-width="1.35"/></svg>
<svg class="i" style="left:148.60px;top:355.30px;" width="13.00" height="10.00" viewBox="0 0 13.00 10.00"><rect x="0" y="0" width="13" height="10" rx="2.2" fill="#1c1c1c"/><rect x="1.7" y="1.7" width="9.6" height="3.6" rx=".6" fill="#fff"/><rect x="2.1" y="7" width="2.1" height="1" fill="#fff"/><rect x="4.9" y="7" width="2.1" height="1" fill="#fff"/></svg>
<div class="t" style="left:171.00px;top:354.70px;font-size:11.1px;line-height:11.1px;color:#0a0a0a;font-weight:normal;font-family:'Liberation Sans';">sdui5statitem1</div>
<svg class="i" style="left:167.70px;top:382.20px;" width="13.00" height="10.00" viewBox="0 0 13.00 10.00"><rect x="0" y="0" width="13" height="10" rx="2.2" fill="#1c1c1c"/><rect x="1.7" y="1.7" width="9.6" height="3.6" rx=".6" fill="#fff"/><rect x="2.1" y="7" width="2.1" height="1" fill="#fff"/><rect x="4.9" y="7" width="2.1" height="1" fill="#fff"/></svg>
<div class="t" style="left:190.10px;top:381.60px;font-size:11.1px;line-height:11.1px;color:#0a0a0a;font-weight:normal;font-family:'Liberation Sans';">sdui5statitem1_actions</div>
<svg class="i" style="left:126.90px;top:410.00px;" width="11.60" height="7.20" viewBox="0 0 11.60 7.20"><path d="M0.7 0.7L5.8 6.1L10.9 0.7" fill="none" stroke="#1e1e1e" stroke-width="1.35"/></svg>
<svg class="i" style="left:148.60px;top:410.20px;" width="13.00" height="10.00" viewBox="0 0 13.00 10.00"><rect x="0" y="0" width="13" height="10" rx="2.2" fill="#1c1c1c"/><rect x="1.7" y="1.7" width="9.6" height="3.6" rx=".6" fill="#fff"/><rect x="2.1" y="7" width="2.1" height="1" fill="#fff"/><rect x="4.9" y="7" width="2.1" height="1" fill="#fff"/></svg>
<div class="t" style="left:171.00px;top:409.60px;font-size:11.1px;line-height:11.1px;color:#0a0a0a;font-weight:normal;font-family:'Liberation Sans';">sdui5statitem2</div>
<svg class="i" style="left:167.70px;top:437.50px;" width="13.00" height="10.00" viewBox="0 0 13.00 10.00"><rect x="0" y="0" width="13" height="10" rx="2.2" fill="#1c1c1c"/><rect x="1.7" y="1.7" width="9.6" height="3.6" rx=".6" fill="#fff"/><rect x="2.1" y="7" width="2.1" height="1" fill="#fff"/><rect x="4.9" y="7" width="2.1" height="1" fill="#fff"/></svg>
<div class="t" style="left:190.10px;top:436.90px;font-size:11.1px;line-height:11.1px;color:#0a0a0a;font-weight:normal;font-family:'Liberation Sans';">sdui5statitem2_actions</div>
<svg class="i" style="left:126.90px;top:464.20px;" width="11.60" height="7.20" viewBox="0 0 11.60 7.20"><path d="M0.7 0.7L5.8 6.1L10.9 0.7" fill="none" stroke="#1e1e1e" stroke-width="1.35"/></svg>
<svg class="i" style="left:148.60px;top:464.40px;" width="13.00" height="10.00" viewBox="0 0 13.00 10.00"><rect x="0" y="0" width="13" height="10" rx="2.2" fill="#1c1c1c"/><rect x="1.7" y="1.7" width="9.6" height="3.6" rx=".6" fill="#fff"/><rect x="2.1" y="7" width="2.1" height="1" fill="#fff"/><rect x="4.9" y="7" width="2.1" height="1" fill="#fff"/></svg>
<div class="t" style="left:171.00px;top:463.80px;font-size:11.1px;line-height:11.1px;color:#0a0a0a;font-weight:normal;font-family:'Liberation Sans';">sdui5statitem3</div>
<svg class="i" style="left:167.70px;top:491.30px;" width="13.00" height="10.00" viewBox="0 0 13.00 10.00"><rect x="0" y="0" width="13" height="10" rx="2.2" fill="#1c1c1c"/><rect x="1.7" y="1.7" width="9.6" height="3.6" rx=".6" fill="#fff"/><rect x="2.1" y="7" width="2.1" height="1" fill="#fff"/><rect x="4.9" y="7" width="2.1" height="1" fill="#fff"/></svg>
<div class="t" style="left:190.10px;top:490.70px;font-size:11.1px;line-height:11.1px;color:#0a0a0a;font-weight:normal;font-family:'Liberation Sans';">sdui5statitem3_actions</div>
<svg class="i" style="left:91.80px;top:517.30px;" width="7.00" height="10.40" viewBox="0 0 7.00 10.40"><path d="M0.7 0.6L6.1 5.2L0.7 9.8" fill="none" stroke="#1e1e1e" stroke-width="1.35"/></svg>
<svg class="i" style="left:110.40px;top:517.90px;" width="13.00" height="10.00" viewBox="0 0 13.00 10.00"><rect x="0" y="0" width="13" height="10" rx="2.2" fill="#1c1c1c"/><rect x="1.7" y="1.7" width="9.6" height="3.6" rx=".6" fill="#fff"/><rect x="2.1" y="7" width="2.1" height="1" fill="#fff"/><rect x="4.9" y="7" width="2.1" height="1" fill="#fff"/></svg>
<div class="t" style="left:132.80px;top:517.30px;font-size:11.1px;line-height:11.1px;color:#0a0a0a;font-weight:normal;font-family:'Liberation Sans';">sdui5column2</div>
<svg class="i" style="left:69.60px;top:546.30px;" width="11.60" height="7.20" viewBox="0 0 11.60 7.20"><path d="M0.7 0.7L5.8 6.1L10.9 0.7" fill="none" stroke="#1e1e1e" stroke-width="1.35"/></svg>
<svg class="i" style="left:91.30px;top:546.50px;" width="13.00" height="10.00" viewBox="0 0 13.00 10.00"><rect x="0" y="0" width="13" height="10" rx="2.2" fill="#1c1c1c"/><rect x="1.7" y="1.7" width="9.6" height="3.6" rx=".6" fill="#fff"/><rect x="2.1" y="7" width="2.1" height="1" fill="#fff"/><rect x="4.9" y="7" width="2.1" height="1" fill="#fff"/></svg>
<div class="t" style="left:113.70px;top:545.90px;font-size:11.1px;line-height:11.1px;color:#0a0a0a;font-weight:normal;font-family:'Liberation Sans';">sdui5row2</div>
<svg class="i" style="left:88.70px;top:573.10px;" width="11.60" height="7.20" viewBox="0 0 11.60 7.20"><path d="M0.7 0.7L5.8 6.1L10.9 0.7" fill="none" stroke="#1e1e1e" stroke-width="1.35"/></svg>
<svg class="i" style="left:110.40px;top:573.30px;" width="13.00" height="10.00" viewBox="0 0 13.00 10.00"><rect x="0" y="0" width="13" height="10" rx="2.2" fill="#1c1c1c"/><rect x="1.7" y="1.7" width="9.6" height="3.6" rx=".6" fill="#fff"/><rect x="2.1" y="7" width="2.1" height="1" fill="#fff"/><rect x="4.9" y="7" width="2.1" height="1" fill="#fff"/></svg>
<div class="t" style="left:132.80px;top:572.70px;font-size:11.1px;line-height:11.1px;color:#0a0a0a;font-weight:normal;font-family:'Liberation Sans';">sdui5column3</div>
<svg class="i" style="left:129.50px;top:600.20px;" width="13.00" height="10.00" viewBox="0 0 13.00 10.00"><rect x="0" y="0" width="13" height="10" rx="2.2" fill="#1c1c1c"/><rect x="1.7" y="1.7" width="9.6" height="3.6" rx=".6" fill="#fff"/><rect x="2.1" y="7" width="2.1" height="1" fill="#fff"/><rect x="4.9" y="7" width="2.1" height="1" fill="#fff"/></svg>
<div class="t" style="left:151.90px;top:599.60px;font-size:11.1px;line-height:11.1px;color:#0a0a0a;font-weight:normal;font-family:'Liberation Sans';">sdui5toastchart2</div>
<svg class="i" style="left:88.70px;top:627.30px;" width="11.60" height="7.20" viewBox="0 0 11.60 7.20"><path d="M0.7 0.7L5.8 6.1L10.9 0.7" fill="none" stroke="#1e1e1e" stroke-width="1.35"/></svg>
<svg class="i" style="left:110.40px;top:627.50px;" width="13.00" height="10.00" viewBox="0 0 13.00 10.00"><rect x="0" y="0" width="13" height="10" rx="2.2" fill="#1c1c1c"/><rect x="1.7" y="1.7" width="9.6" height="3.6" rx=".6" fill="#fff"/><rect x="2.1" y="7" width="2.1" height="1" fill="#fff"/><rect x="4.9" y="7" width="2.1" height="1" fill="#fff"/></svg>
<div class="t" style="left:132.80px;top:626.90px;font-size:11.1px;line-height:11.1px;color:#0a0a0a;font-weight:normal;font-family:'Liberation Sans';">sdui5column4</div>
<svg class="i" style="left:129.50px;top:654.20px;" width="13.00" height="10.00" viewBox="0 0 13.00 10.00"><rect x="0" y="0" width="13" height="10" rx="2.2" fill="#1c1c1c"/><rect x="1.7" y="1.7" width="9.6" height="3.6" rx=".6" fill="#fff"/><rect x="2.1" y="7" width="2.1" height="1" fill="#fff"/><rect x="4.9" y="7" width="2.1" height="1" fill="#fff"/></svg>
<div class="t" style="left:151.90px;top:653.60px;font-size:11.1px;line-height:11.1px;color:#0a0a0a;font-weight:normal;font-family:'Liberation Sans';">sdui5toastchart1</div>
<div style="position:absolute;left:34.0px;top:248.3px;width:1px;height:415.7px;background:#e6e6e6"></div>
<div style="position:absolute;left:53.1px;top:275.2px;width:1px;height:388.8px;background:#e6e6e6"></div>
<div style="position:absolute;left:71.9px;top:301.9px;width:1px;height:225.8px;background:#e6e6e6"></div>
<div style="position:absolute;left:71.9px;top:574px;width:1px;height:90.0px;background:#e6e6e6"></div>
<div style="position:absolute;left:91.0px;top:329.8px;width:1px;height:170.6px;background:#e6e6e6"></div>
<div style="position:absolute;left:110.0px;top:357.2px;width:1px;height:143.2px;background:#e6e6e6"></div>
<div style="position:absolute;left:129.9px;top:384px;width:1px;height:8.0px;background:#e6e6e6"></div>
<div style="position:absolute;left:129.9px;top:438.5px;width:1px;height:8.0px;background:#e6e6e6"></div>
<div style="position:absolute;left:129.9px;top:492.5px;width:1px;height:7.9px;background:#e6e6e6"></div>
<div style="position:absolute;left:90.9px;top:601px;width:1px;height:7.8px;background:#e6e6e6"></div>
<div style="position:absolute;left:90.9px;top:655.8px;width:1px;height:8.2px;background:#e6e6e6"></div>
<div style="position:absolute;left:488.2px;top:236.2px;width:1409.5px;height:665.3px;border:1px solid #e8e8e8;border-radius:6px;box-sizing:border-box;background:#fff"></div>
<div style="position:absolute;left:594px;top:205px;width:39.2px;height:32.2px;border:1px solid #e8e8e8;border-bottom:none;border-radius:5px 5px 0 0;box-sizing:border-box;background:#fff"></div>
<div class="t" style="left:498.20px;top:214.84px;font-size:10.7px;line-height:10.7px;color:#8c8c8c;font-weight:normal;font-family:'Liberation Sans';">Preview</div>
<div class="t" style="left:555.40px;top:214.84px;font-size:10.7px;line-height:10.7px;color:#8c8c8c;font-weight:normal;font-family:'Liberation Sans';">HTML</div>
<div class="t" style="left:603.90px;top:214.84px;font-size:10.7px;line-height:10.7px;color:#222;font-weight:normal;font-family:'Liberation Sans';">B4X</div>
<div id="cw"><div id="cwh"></div><div id="code"><div id="codein">
<span style="color:#66d9ef">End Sub</span>
<span style="color:#8a8f98">'</span>
<span style="color:#66d9ef">Private Sub</span> BuildPage
    sdui5row1.Initialize(<span style="color:#66d9ef">Me</span>, <span style="color:#a6e22e">&quot;sdui5row1&quot;</span>, <span style="color:#a6e22e">&quot;sdui5row1&quot;</span>)
    sdui5row1.ParentID = <span style="color:#a6e22e">&quot;sdui5page1&quot;</span>
    sdui5row1.Gap = <span style="color:#a6e22e">&quot;&quot;</span>
    BANano.Await(sdui5row1.AddComponent)
    <span style="color:#8a8f98">'</span>
    sdui5column1.Initialize(<span style="color:#66d9ef">Me</span>, <span style="color:#a6e22e">&quot;sdui5column1&quot;</span>, <span style="color:#a6e22e">&quot;sdui5column1&quot;</span>)
    sdui5column1.ParentID = <span style="color:#a6e22e">&quot;sdui5row1&quot;</span>
    sdui5column1.Size = <span style="color:#a6e22e">&quot;6&quot;</span>
    BANano.Await(sdui5column1.AddComponent)
    <span style="color:#8a8f98">'</span>
    sdui5stat1.Initialize(<span style="color:#66d9ef">Me</span>, <span style="color:#a6e22e">&quot;sdui5stat1&quot;</span>, <span style="color:#a6e22e">&quot;sdui5stat1&quot;</span>)
    sdui5stat1.ParentID = <span style="color:#a6e22e">&quot;sdui5column1&quot;</span>
    BANano.Await(sdui5stat1.AddComponent)
    <span style="color:#8a8f98">'</span>
    sdui5statitem1.Initialize(<span style="color:#66d9ef">Me</span>, <span style="color:#a6e22e">&quot;sdui5statitem1&quot;</span>, <span style="color:#a6e22e">&quot;sdui5statitem1&quot;</span>)
    sdui5statitem1.ParentID = <span style="color:#a6e22e">&quot;sdui5stat1&quot;</span>
    sdui5statitem1.FigureType = <span style="color:#a6e22e">&quot;icon&quot;</span>
    sdui5statitem1.FigureColor = <span style="color:#a6e22e">&quot;#1abb5a&quot;</span>
    sdui5statitem1.Icon = <span style="color:#a6e22e">&quot;./assets/circle-user-solid-full.svg&quot;</span>
    sdui5statitem1.IconHeight = <span style="color:#a6e22e">&quot;42px&quot;</span>
    sdui5statitem1.IconWidth = <span style="color:#a6e22e">&quot;42px&quot;</span>
    BANano.Await(sdui5statitem1.AddComponent)
    <span style="color:#8a8f98">'</span>
    sdui5statitem2.Initialize(<span style="color:#66d9ef">Me</span>, <span style="color:#a6e22e">&quot;sdui5statitem2&quot;</span>, <span style="color:#a6e22e">&quot;sdui5statitem2&quot;</span>)
    sdui5statitem2.ParentID = <span style="color:#a6e22e">&quot;sdui5stat1&quot;</span>
    sdui5statitem2.FigureType = <span style="color:#a6e22e">&quot;radial-progress&quot;</span>
    sdui5statitem2.Title = <span style="color:#a6e22e">&quot;Tasks Completed&quot;</span>
    sdui5statitem2.Value = <span style="color:#a6e22e">&quot;20/30&quot;</span>
    sdui5statitem2.Desc = <span style="color:#a6e22e">&quot;&quot;</span>
    sdui5statitem2.FigureColor = <span style="color:#a6e22e">&quot;#1abb5a&quot;</span>
    sdui5statitem2.Icon = <span style="color:#a6e22e">&quot;./assets/circle-user-solid-full.svg&quot;</span>
    sdui5statitem2.IconHeight = <span style="color:#a6e22e">&quot;42px&quot;</span>
</div></div><div id="cwf"></div>
<div id="sbu"></div><div id="sbd"></div><div id="thumb"></div>
<svg style="position:absolute;left:0;top:0" width="70" height="44" viewBox="0 0 70 44"><circle cx="20.1" cy="20.8" r="4.7" fill="#3b3b3d"/><circle cx="35.6" cy="20.8" r="4.7" fill="#3b3b3d"/><circle cx="51.3" cy="20.8" r="4.7" fill="#3b3b3d"/></svg>
</div>
<div style="position:absolute;left:0;top:938px;width:1912px;height:16px;background:linear-gradient(#fdfdfd,#fafafa)"></div>
<svg class="i" style="left:786px;top:274px" width="14" height="21" viewBox="0 0 14 21"><path d="M1.9 2.2V17.2L5.2 13.9L7.6 18.9L9.7 18L7.4 13.1H12.4Z" fill="#fff" stroke="#000" stroke-width="1.1" stroke-linejoin="miter"/></svg>
</body></html>
